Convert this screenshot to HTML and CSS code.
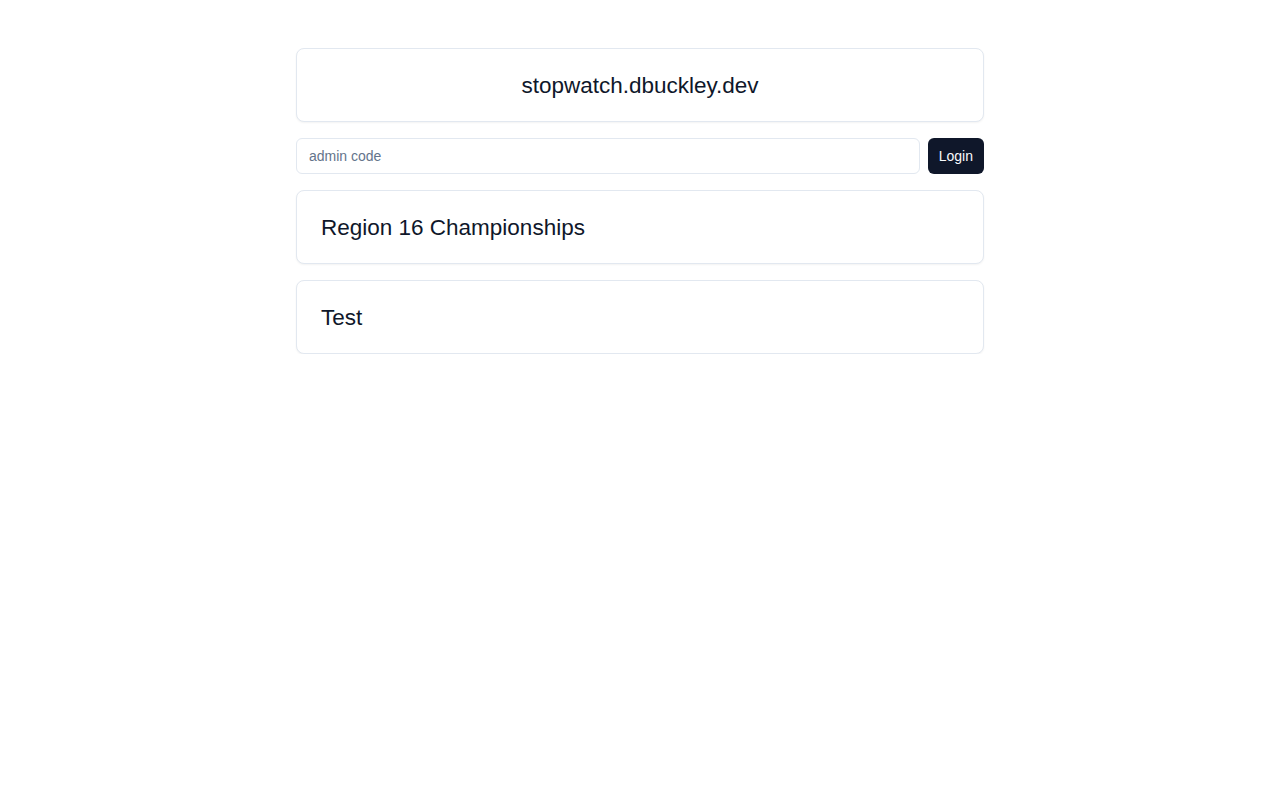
FILE: index.html
```html
<!DOCTYPE html>
<html>
<head>
<meta charset="utf-8">
<link rel="stylesheet" href="styles.css">
</head>
<body>
<main class="container">
  <div class="card">
    <div class="card-header center">
      <h1 class="card-title">stopwatch.dbuckley.dev</h1>
    </div>
  </div>
  <form class="login-row">
    <input class="input" type="text" placeholder="admin code">
    <button class="btn" type="button">Login</button>
  </form>
  <div class="card">
    <div class="card-header">
      <h2 class="card-title">Region 16 Championships</h2>
    </div>
  </div>
  <div class="card">
    <div class="card-header">
      <h2 class="card-title">Test</h2>
    </div>
  </div>
</main>
</body>
</html>
```
FILE: styles.css
```css
* { box-sizing: border-box; }
html, body { margin: 0; padding: 0; background: #fff; }
body {
  font-family: "Liberation Sans", Arial, sans-serif;
  color: #0f172a;
}
.container {
  width: 688px;
  margin: 48px auto 0;
  display: flex;
  flex-direction: column;
  gap: 16px;
}
.card {
  border: 1px solid #e2e8f0;
  border-radius: 8px;
  background: #fff;
  box-shadow: 0 1px 2px rgba(0,0,0,0.05);
}
.card-header {
  padding: 25px 24px 23px;
}
.card-header.center { text-align: center; }
.card-title {
  margin: 0;
  font-size: 22.5px;
  font-weight: 400;
  line-height: 24px;
  color: #0f172a;
}
.login-row {
  display: flex;
  gap: 8px;
  margin: 0;
}
.input {
  flex: 1;
  height: 36px;
  border: 1px solid #e2e8f0;
  border-radius: 6px;
  padding: 0 12px;
  font-family: inherit;
  font-size: 14px;
  color: #0f172a;
  background: #fff;
  outline: none;
}
.input::placeholder { color: #64748b; }
.btn {
  height: 36px;
  border: none;
  border-radius: 6px;
  background: #0f172a;
  color: #f8fafc;
  font-family: inherit;
  font-size: 14px;
  padding: 0 11px;
  cursor: pointer;
}
```
